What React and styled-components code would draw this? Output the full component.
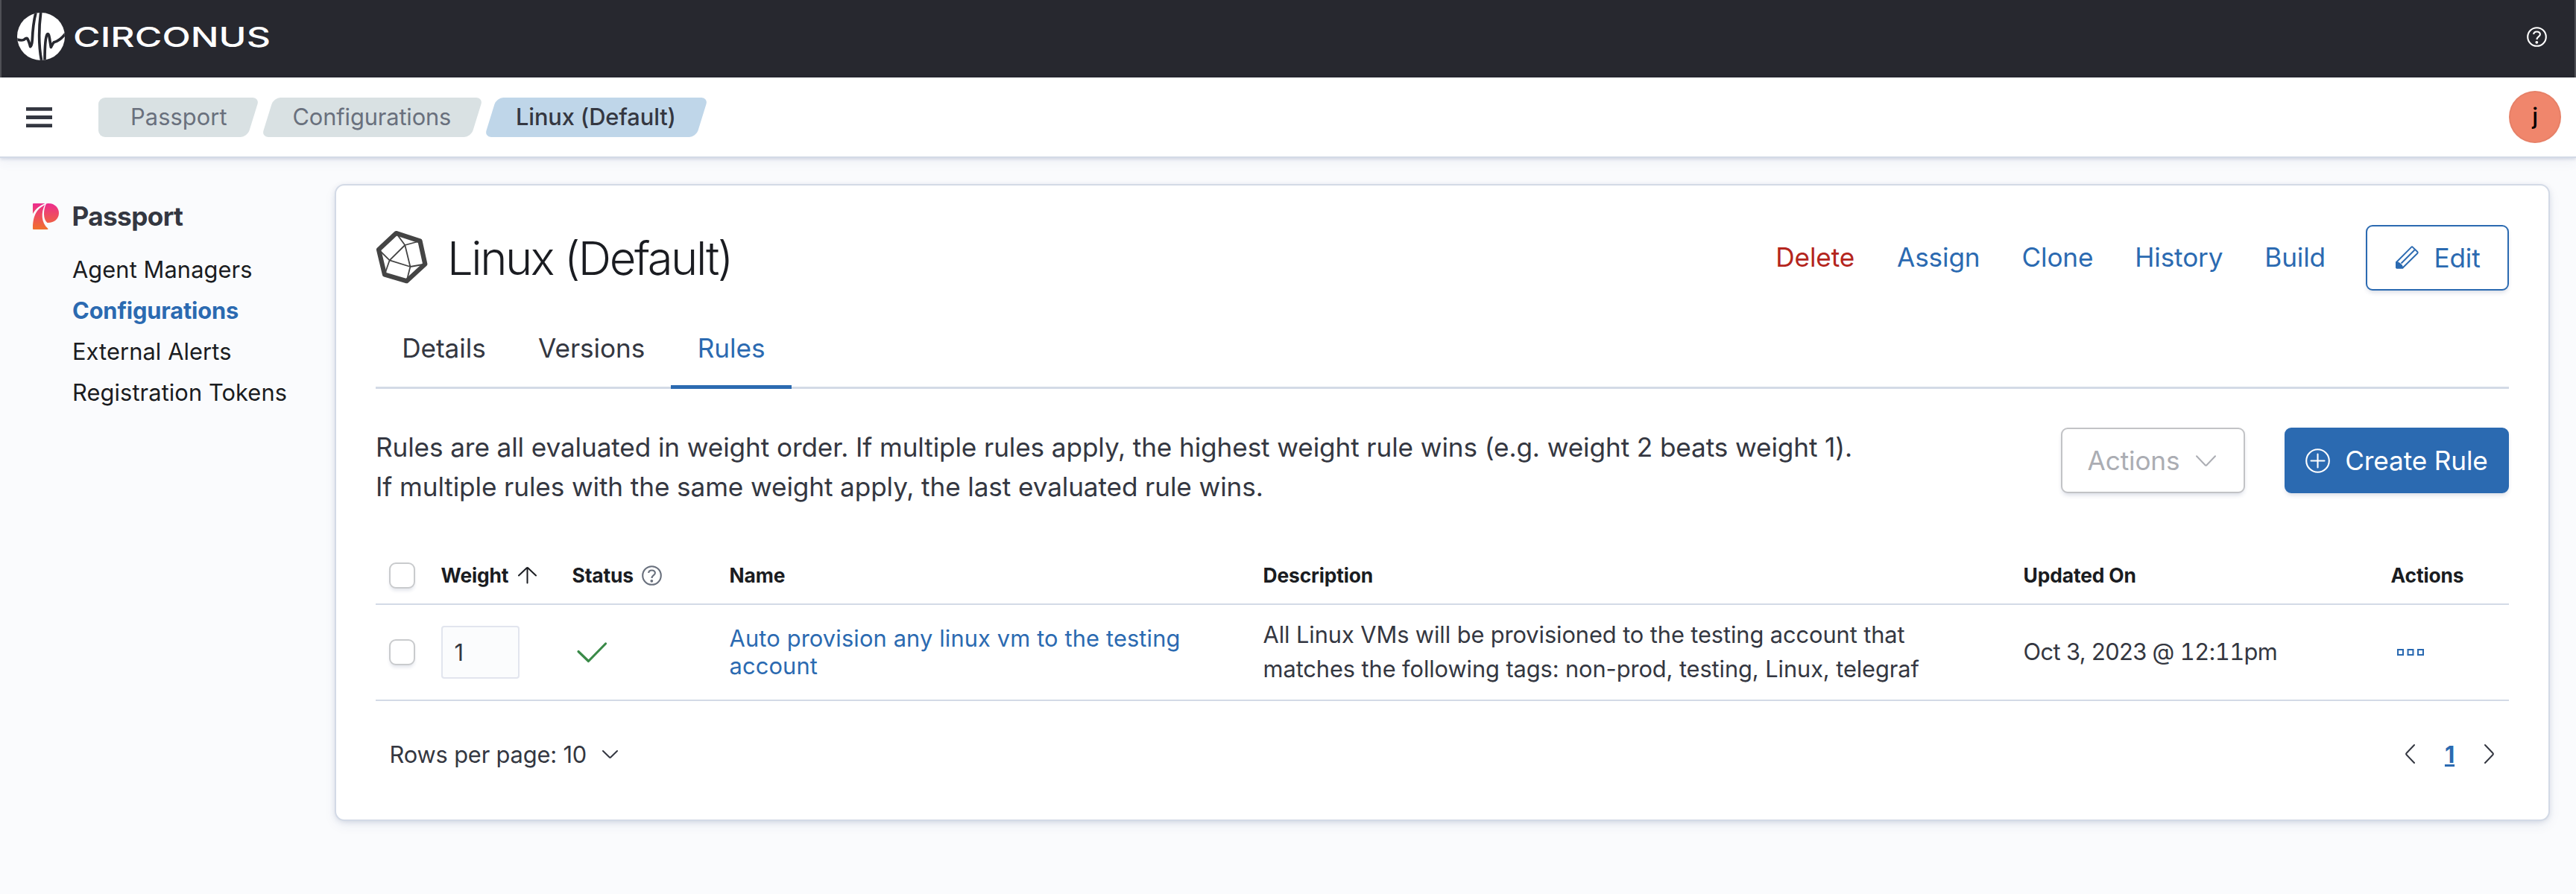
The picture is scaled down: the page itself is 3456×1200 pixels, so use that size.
import React from "react";
import styled, { createGlobalStyle, css } from "styled-components";

const c = {
  ink: "#1a1c21",
  text: "#343741",
  subdued: "#69707d",
  primary: "#2b6ab1",
  danger: "#b4251d",
  border: "#d3dae6",
  page: "#fafbfd",
};

const GlobalStyle = createGlobalStyle`
  *, *::before, *::after { box-sizing: border-box; }
  body {
    margin: 0;
    background: ${c.page};
    color: ${c.text};
    font-family: Inter, "Open Sans", sans-serif;
    font-size: 30.8px;
    letter-spacing: -0.005em;
  }
`;

const Page = styled.div`
  display: flex;
  flex-direction: column;
  min-height: 1200px;
`;

const Icon = styled.svg`
  display: block;
  flex: none;
  overflow: visible;
`;

/* ---------- headers ---------- */

const BrandBar = styled.header`
  display: flex;
  align-items: center;
  justify-content: space-between;
  height: 104px;
  padding: 0 37px 6px 21px;
  background: #27282f;
  border: solid #4f5056;
  border-width: 0 2px;
`;

const Brand = styled.div`
  display: flex;
  align-items: center;
  gap: 10.5px;
`;

const Wordmark = styled.span`
  padding-top: 2px;
  color: #fff;
  font-size: 37px;
  font-weight: 500;
  line-height: 40px;
  letter-spacing: 0;
  transform: scaleX(1.352);
  transform-origin: left center;
`;

const NavBar = styled.div`
  position: relative;
  display: flex;
  align-items: center;
  height: 108px;
  padding: 0 20px 0 35px;
  background: #fff;
  border-bottom: 2px solid ${c.border};
  box-shadow: 0 2px 4px rgba(60, 80, 130, 0.16), 0 6px 14px rgba(60, 80, 130, 0.06);
`;

const Crumbs = styled.nav`
  display: flex;
  gap: 18.5px;
  margin-left: 62px;
  flex: 1;
`;

const Crumb = styled.a`
  position: relative;
  z-index: 0;
  width: ${(p) => p.$width}px;
  height: 53px;
  line-height: 52px;
  padding-left: 34px;
  white-space: nowrap;
  letter-spacing: -0.004em;
  color: ${(p) => (p.$current ? c.text : c.subdued)};
  font-weight: ${(p) => (p.$current ? 500 : 400)};

  &::before {
    content: "";
    position: absolute;
    z-index: -1;
    inset: 0;
    border-radius: 9px;
    background: ${(p) => (p.$current ? "#bfd6e9" : "#d9e1e3")};
    transform: skewX(-17.2deg);
  }

  &:first-child {
    padding-left: 43px;
    letter-spacing: 0.003em;
  }
  &:first-child::before {
    left: 50px;
  }
  &:first-child::after {
    content: "";
    position: absolute;
    z-index: -1;
    inset: 0 60px 0 0;
    border-radius: 9px;
    background: #d9e1e3;
  }
`;

const Avatar = styled.div`
  width: 70px;
  height: 70px;
  border-radius: 50%;
  background: #f0866c;
  box-shadow: inset 0 0 0 2px rgba(0, 0, 0, 0.04);
  color: #000;
  font-weight: 500;
  line-height: 68px;
  text-align: center;
`;

/* ---------- side navigation ---------- */

const Body = styled.div`
  display: flex;
`;

const Side = styled.aside`
  width: 449px;
  padding: 61px 0 0 44px;
`;

const SideTitle = styled.div`
  display: flex;
  gap: 17.5px;
  align-items: center;
  height: 35px;
  font-size: 35.2px;
  font-weight: 700;
  line-height: 33px;
  letter-spacing: -0.018em;
`;

const SideList = styled.div`
  display: flex;
  flex-direction: column;
  padding: 26px 0 0 53px;
`;

const SideLink = styled.a`
  line-height: 55px;
  color: ${(p) => (p.$active ? c.primary : c.ink)};
  font-weight: ${(p) => (p.$active ? 700 : 400)};
  letter-spacing: ${(p) => (p.$active ? "-0.005em" : "0.003em")};
`;

/* ---------- panel ---------- */

const Panel = styled.main`
  width: 2972px;
  height: 855px;
  margin-top: 35px;
  padding: 53px;
  background: #fff;
  border: 2px solid ${c.border};
  border-radius: 13px;
  box-shadow: 0 2px 9px -2px rgba(40, 60, 110, 0.2), 0 6px 18px -2px rgba(40, 60, 110, 0.08);
`;

const TitleRow = styled.div`
  display: flex;
  align-items: center;
  height: 88px;
`;

const Title = styled.h1`
  flex: 1;
  margin: 0 0 0 24px;
  color: ${c.ink};
  font-size: 61.6px;
  font-weight: 300;
  line-height: 77px;
  letter-spacing: -0.04em;
`;

const Links = styled.div`
  display: flex;
  gap: 56px;
  margin-right: 54px;
  padding-bottom: 2px;
  font-size: 35.2px;
`;

const ActionLink = styled.a`
  color: ${(p) => (p.$danger ? c.danger : c.primary)};
  padding-right: ${(p) => (p.$danger ? 1 : 0)}px;
`;

const variants = {
  outline: css`
    color: ${c.primary};
    border: 2px solid ${c.primary};
    background: #fff;
  `,
  disabled: css`
    color: #abadb3;
    border: 2px solid #c2c3c6;
    background: #fff;
  `,
  filled: css`
    color: #fff;
    border: 2px solid ${c.primary};
    background: ${c.primary};
  `,
};

const Button = styled.button`
  display: flex;
  align-items: center;
  justify-content: center;
  gap: ${(p) => p.$gap}px;
  width: ${(p) => p.$width}px;
  height: 88px;
  padding: ${(p) => p.$padding || "0"};
  border-radius: 9px;
  font: inherit;
  font-size: 35.2px;
  letter-spacing: inherit;
  box-shadow: 0 4px 6px -2px rgba(40, 60, 110, 0.2);
  ${(p) => variants[p.$variant]}
`;

const Tabs = styled.div`
  display: flex;
  height: 108px;
  margin-top: 24px;
  box-shadow: inset 0 -3px ${c.border};
`;

const Tab = styled.a`
  padding: 0 35.2px;
  font-size: 35.2px;
  line-height: 107px;
  letter-spacing: -0.002em;
  color: ${(p) => (p.$active ? c.primary : c.text)};
  box-shadow: ${(p) => (p.$active ? `inset 0 -5px ${c.primary}` : "none")};
`;

const Intro = styled.div`
  display: flex;
  gap: 53px;
  align-items: flex-start;
  height: 106px;
  margin-top: 52px;
`;

const IntroText = styled.p`
  flex: 1;
  margin: 0;
  font-size: 35.2px;
  line-height: 53px;
  letter-spacing: -0.0035em;
`;

/* ---------- table ---------- */

const Table = styled.div`
  margin-top: 54px;
`;

const Row = styled.div`
  display: grid;
  grid-template-columns: 70px 176px 211px 716px 1020px 493px 176px;
  align-items: center;
  height: ${(p) => (p.$head ? 78 : 129)}px;
  border-bottom: 2px solid ${c.border};
`;

const Cell = styled.div`
  display: flex;
  align-items: center;
  gap: ${(p) => p.$gap || 0}px;
  padding-left: 17.6px;
`;

const TextCell = styled(Cell)`
  padding-bottom: 2px;
`;

const StatusCell = styled(Cell)`
  padding-left: 24px;
  color: #3a8a48;
`;

const MenuCell = styled(Cell)`
  padding-left: 26px;
`;

const Th = styled(Cell)`
  color: ${c.ink};
  font-size: 26.4px;
  font-weight: 700;
`;

const Checkbox = styled.span`
  width: 35px;
  height: 35px;
  border: 2px solid #c9cbcd;
  border-radius: 9px;
  background: #fff;
  box-shadow: 0 4px 4px -1px rgba(40, 60, 110, 0.12);
`;

const WeightField = styled.span`
  width: 105px;
  height: 71px;
  padding-left: 16px;
  border: 2px solid #e2e5ee;
  border-radius: 4px;
  background: #fbfcfd;
  line-height: 67px;
`;

const RuleLink = styled.a`
  width: 640px;
  color: ${c.primary};
  line-height: 37px;
  letter-spacing: 0.0045em;
`;

const Description = styled.span`
  width: 920px;
  line-height: 46px;
  letter-spacing: -0.003em;
`;

const Timestamp = styled.span`
  letter-spacing: -0.02em;
`;

const Digits = styled.span`
  font-feature-settings: "tnum" 1;
`;

const Footer = styled.div`
  display: flex;
  justify-content: space-between;
  align-items: center;
  height: 46px;
  margin-top: 48px;
  padding: 0 20px 0 18.5px;
`;

const RowsPerPage = styled.div`
  display: flex;
  align-items: center;
  gap: 21px;
`;

const Pager = styled.div`
  display: flex;
  align-items: center;
  gap: 39px;
`;

const PageNumber = styled.a`
  width: 15px;
  color: ${c.primary};
  font-weight: 700;
  text-align: center;
  text-decoration: underline;
`;

/* ---------- icons ---------- */

const BrandMark = () => (
  <Icon width="64" height="64" viewBox="69 51 192 192">
    <defs>
      <clipPath id="disc">
        <circle cx="165" cy="147" r="96" />
      </clipPath>
    </defs>
    <circle cx="165" cy="147" r="96" fill="#fff" />
    <g clipPath="url(#disc)" fill="none" stroke="#27282f" strokeWidth="11" strokeLinejoin="round">
      <path d="M60 157 Q84 165 96 160 Q106 152 110 155 Q116 164 122 188 Q128 186 130 160 C132 110 136 80 146 44" />
      <path d="M165 44 C156 110 156 190 168 250" />
      <path d="M180 250 C180 200 182 150 190 138 Q196 132 199 152 L205 190 Q212 176 217 170 Q242 164 266 132" />
    </g>
  </Icon>
);

const HelpIcon = ({ color }) => (
  <Icon width="27" height="27" viewBox="-13.5 -13.5 27 27" fill="none" stroke={color} strokeWidth="2.1">
    <circle r="12.3" />
    <path d="M-4.3 -3.4C-4.3 -8.2 4.4 -8.2 4.4 -3.6C4.4 -0.4 0 -0.2 0 3.6" />
    <circle cx="-.2" cy="7.3" r="1.9" fill={color} stroke="none" />
  </Icon>
);

const MenuIcon = () => (
  <Icon width="35" height="27" viewBox="0 0 35 27" fill={c.text}>
    <path d="M0 0h35v4.8H0zM0 11.1h35v4.8H0zM0 22.2h35v4.8H0z" />
  </Icon>
);

const PassportIcon = () => (
  <Icon width="35" height="35" viewBox="0 0 35 35" fill="url(#passport)">
    <defs>
      <linearGradient id="passport" gradientUnits="userSpaceOnUse" x1="0" y1="0" x2="0" y2="35">
        <stop offset="0" stopColor="#ec2c8f" />
        <stop offset="1" stopColor="#f0712c" />
      </linearGradient>
    </defs>
    <path d="M0 1Q0 0 1 0H16.500C9 3 4 7 0 14Z" />
    <path d="M0 34C0 22 2 9 16 2C11 12 11 26 20.500 34Q20.500 35 19.500 35H1Q0 35 0 34Z" />
    <path d="M19 .2C29 -1 35 6 35 13C35 21 28 26.500 19.500 26C13.500 22 14 8 18 .6Z" />
  </Icon>
);

const NodeIcon = () => (
  <Icon width="72" height="72" viewBox="504 310 72 72" fill="none" stroke="#444" strokeLinejoin="round">
    <path strokeWidth="6.200" d="M531.500 313L563.500 323.500L570.300 354.500L545.600 377.200L516 368.500L508 335Z" />
    <path
      strokeWidth="1.800"
      d="M543.300 329L522.700 349.300L550.400 358ZM531.500 313L543.300 329L563.500 323.500M508 335L522.700 349.300L516 368.500M545.600 377.200L550.400 358L570.300 354.500"
    />
  </Icon>
);

const PencilIcon = () => (
  <Icon width="31" height="31" viewBox="0 0 31 31" fill="none" stroke="currentColor" strokeWidth="1.900" strokeLinejoin="round">
    <path d="M1 22L21 1.800Q22 .8 23 1.800L29.300 8Q30.200 9 29.300 10L9.500 29.500H2Q1 29.500 1 28.500Z" />
    <path d="M7.500 23.500L25.500 5.500" />
    <path d="M1 22C4 22.500 8.500 25 9.500 29.500H2Q1 29.500 1 28.500Z" fill="currentColor" />
  </Icon>
);

const Chevron = ({ width, height, d, stroke = 2 }) => (
  <Icon
    width={width}
    height={height}
    viewBox={`0 0 ${width} ${height}`}
    fill="none"
    stroke="currentColor"
    strokeWidth={stroke}
    strokeLinecap="round"
    strokeLinejoin="round"
  >
    <path d={d} />
  </Icon>
);

const PlusCircle = () => (
  <Icon width="33" height="33" viewBox="0 0 33 33" fill="none" stroke="currentColor" strokeWidth="2.100" strokeLinecap="round">
    <circle cx="16.500" cy="16.500" r="15.300" />
    <path d="M16.500 7.500V25.500M7.500 16.500H25.500" />
  </Icon>
);

const DotsIcon = () => (
  <Icon width="36" height="9" viewBox="0 0 36 9" fill="none" stroke={c.primary} strokeWidth="2.100">
    <path d="M1.050 1.050h6.900v6.900h-6.900zM14.550 1.050h6.900v6.900h-6.900zM28.050 1.050h6.900v6.900h-6.900z" />
  </Icon>
);

const actions = ["Assign", "Clone", "History", "Build"];
const sideItems = ["Agent Managers", "Configurations", "External Alerts", "Registration Tokens"];

export default function App() {
  return (
    <Page>
      <GlobalStyle />
      <BrandBar>
        <Brand>
          <BrandMark />
          <Wordmark>CIRCONUS</Wordmark>
        </Brand>
        <HelpIcon color="#fff" />
      </BrandBar>
      <NavBar>
        <MenuIcon />
        <Crumbs>
          <Crumb $width={208}>Passport</Crumb>
          <Crumb $width={281}>Configurations</Crumb>
          <Crumb $width={284} $current>
            Linux (Default)
          </Crumb>
        </Crumbs>
        <Avatar>j</Avatar>
      </NavBar>
      <Body>
        <Side>
          <SideTitle>
            <PassportIcon />
            Passport
          </SideTitle>
          <SideList>
            {sideItems.map((item) => (
              <SideLink key={item} $active={item === "Configurations"}>
                {item}
              </SideLink>
            ))}
          </SideList>
        </Side>
        <Panel>
          <TitleRow>
            <NodeIcon />
            <Title>Linux (Default)</Title>
            <Links>
              <ActionLink $danger>Delete</ActionLink>
              {actions.map((a) => (
                <ActionLink key={a}>{a}</ActionLink>
              ))}
            </Links>
            <Button $variant="outline" $width={192} $gap={20} $padding="0 0 1px 2px">
              <PencilIcon />
              Edit
            </Button>
          </TitleRow>
          <Tabs>
            <Tab>Details</Tab>
            <Tab>Versions</Tab>
            <Tab $active>Rules</Tab>
          </Tabs>
          <Intro>
            <IntroText>
              Rules are all evaluated in weight order. If multiple rules apply, the highest weight rule wins (e.g. weight 2 beats weight 1).
              <br />
              If multiple rules with the same weight apply, the last evaluated rule wins.
            </IntroText>
            <Button $variant="disabled" $width={247} $gap={22} $padding="0 3px 0 0">
              Actions
              <Chevron width={27} height={15} d="M1 1.200L12.500 13.200Q13.500 14.200 14.500 13.200L26 1.200" />
            </Button>
            <Button $variant="filled" $width={301} $gap={20}>
              <PlusCircle />
              Create Rule
            </Button>
          </Intro>
          <Table>
            <Row $head>
              <Th>
                <Checkbox />
              </Th>
              <Th $gap={13}>
                Weight
                <Chevron width={25} height={22} d="M12.500 1V21.500M1 11.500L11.500 1.500Q12.500 .6 13.500 1.500L24 11.500" />
              </Th>
              <Th $gap={11}>
                Status
                <HelpIcon color={c.subdued} />
              </Th>
              <Th>Name</Th>
              <Th>Description</Th>
              <Th>Updated On</Th>
              <Th>Actions</Th>
            </Row>
            <Row>
              <Cell>
                <Checkbox />
              </Cell>
              <Cell>
                <WeightField>1</WeightField>
              </Cell>
              <StatusCell>
                <Chevron width={40} height={27} stroke={3.2} d="M2 12.500L15.500 25.500L38.500 2" />
              </StatusCell>
              <TextCell>
                <RuleLink>Auto provision any linux vm to the testing account</RuleLink>
              </TextCell>
              <TextCell>
                <Description>
                  All Linux VMs will be provisioned to the testing account that matches the following tags: non-prod, testing, Linux, telegraf
                </Description>
              </TextCell>
              <TextCell>
                <Timestamp>
                  Oct 3, 2023 @ <Digits>12</Digits>:<Digits>11</Digits>pm
                </Timestamp>
              </TextCell>
              <MenuCell>
                <DotsIcon />
              </MenuCell>
            </Row>
          </Table>
          <Footer>
            <RowsPerPage>
              Rows per page: 10
              <Chevron width={21} height={11} d="M1 1L9.700 9.500Q10.500 10.200 11.300 9.500L20 1" />
            </RowsPerPage>
            <Pager>
              <Chevron width={13} height={26} d="M12 1L1.500 12Q.7 13 1.500 14L12 25" />
              <PageNumber>1</PageNumber>
              <Chevron width={13} height={26} d="M1 1L11.500 12Q12.300 13 11.500 14L1 25" />
            </Pager>
          </Footer>
        </Panel>
      </Body>
    </Page>
  );
}
